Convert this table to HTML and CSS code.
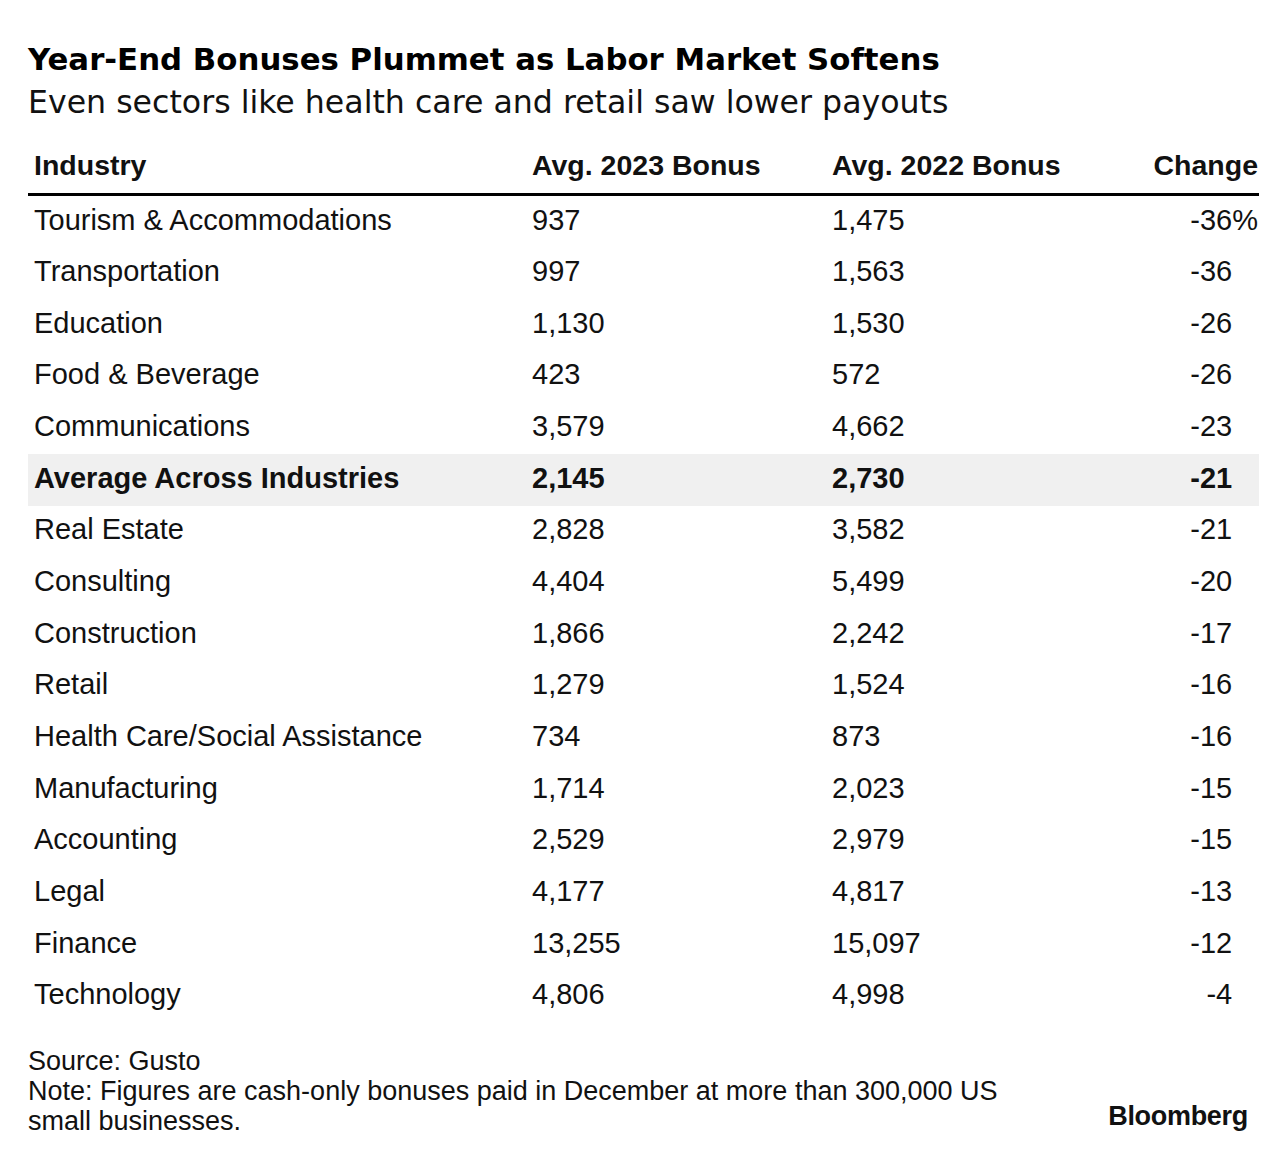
FILE: index.html
```html
<!DOCTYPE html>
<html lang="en">
<head>
<meta charset="utf-8">
<title>Year-End Bonuses Plummet as Labor Market Softens</title>
<link rel="stylesheet" href="styles.css">
</head>
<body>
<main class="chart">
  <h1 class="title">Year-End Bonuses Plummet as Labor Market Softens</h1>
  <p class="subtitle">Even sectors like health care and retail saw lower payouts</p>
  <table class="data">
    <thead>
      <tr>
        <th class="c-ind">Industry</th>
        <th class="c-num">Avg. 2023 Bonus</th>
        <th class="c-num">Avg. 2022 Bonus</th>
        <th class="c-chg">Change</th>
      </tr>
    </thead>
    <tbody>
      <tr><td>Tourism &amp; Accommodations</td><td>937</td><td>1,475</td><td class="chg">-36<span class="pct">%</span></td></tr>
      <tr><td>Transportation</td><td>997</td><td>1,563</td><td class="chg">-36<span class="pct hide">%</span></td></tr>
      <tr><td>Education</td><td>1,130</td><td>1,530</td><td class="chg">-26<span class="pct hide">%</span></td></tr>
      <tr><td>Food &amp; Beverage</td><td>423</td><td>572</td><td class="chg">-26<span class="pct hide">%</span></td></tr>
      <tr><td>Communications</td><td>3,579</td><td>4,662</td><td class="chg">-23<span class="pct hide">%</span></td></tr>
      <tr class="avg"><td>Average Across Industries</td><td>2,145</td><td>2,730</td><td class="chg">-21<span class="pct hide">%</span></td></tr>
      <tr><td>Real Estate</td><td>2,828</td><td>3,582</td><td class="chg">-21<span class="pct hide">%</span></td></tr>
      <tr><td>Consulting</td><td>4,404</td><td>5,499</td><td class="chg">-20<span class="pct hide">%</span></td></tr>
      <tr><td>Construction</td><td>1,866</td><td>2,242</td><td class="chg">-17<span class="pct hide">%</span></td></tr>
      <tr><td>Retail</td><td>1,279</td><td>1,524</td><td class="chg">-16<span class="pct hide">%</span></td></tr>
      <tr><td>Health Care/Social Assistance</td><td>734</td><td>873</td><td class="chg">-16<span class="pct hide">%</span></td></tr>
      <tr><td>Manufacturing</td><td>1,714</td><td>2,023</td><td class="chg">-15<span class="pct hide">%</span></td></tr>
      <tr><td>Accounting</td><td>2,529</td><td>2,979</td><td class="chg">-15<span class="pct hide">%</span></td></tr>
      <tr><td>Legal</td><td>4,177</td><td>4,817</td><td class="chg">-13<span class="pct hide">%</span></td></tr>
      <tr><td>Finance</td><td>13,255</td><td>15,097</td><td class="chg">-12<span class="pct hide">%</span></td></tr>
      <tr><td>Technology</td><td>4,806</td><td>4,998</td><td class="chg">-4<span class="pct hide">%</span></td></tr>
    </tbody>
  </table>
  <footer class="foot">
    <div class="notes">
      <p class="note">Source: Gusto</p>
      <p class="note">Note: Figures are cash-only bonuses paid in December at more than 300,000 US small businesses.</p>
    </div>
    <div class="logo">Bloomberg</div>
  </footer>
</main>
</body>
</html>
```
FILE: styles.css
```css
html, body {
  margin: 0;
  padding: 0;
  background: #ffffff;
}

.chart {
  width: 1231px;
  padding: 41px 0 0 28px;
  color: #111111;
  font-family: "Liberation Sans", Arial, sans-serif;
}

.title {
  margin: 0;
  font-family: "DejaVu Sans", "Liberation Sans", sans-serif;
  font-size: 30.8px;
  line-height: 36px;
  font-weight: 700;
  color: #000000;
}

.subtitle {
  margin: 7px 0 0;
  font-family: "DejaVu Sans", "Liberation Sans", sans-serif;
  font-size: 31.6px;
  line-height: 36px;
  font-weight: 400;
  color: #111111;
}

.data {
  margin-top: 29px;
  width: 1231px;
  border-collapse: collapse;
  table-layout: fixed;
}

.data th {
  font-size: 28.5px;
  line-height: 32px;
  font-weight: 700;
  text-align: left;
  padding: 0 6px 12px;
  border-bottom: 3px solid #000000;
  white-space: nowrap;
}

.data th.c-ind { width: 486px; }
.data th.c-num { width: 288px; }
.data th.c-chg {
  text-align: right;
  padding-right: 1px;
  padding-left: 0;
}

.data td {
  font-size: 29px;
  line-height: 32px;
  padding: 7.5px 6px 12.17px;
  white-space: nowrap;
}

.data td.chg {
  text-align: right;
  padding-right: 1px;
  padding-left: 0;
}

.pct.hide { visibility: hidden; }

.data tr.avg td {
  background: #f0f0f0;
  font-weight: 700;
}

.foot {
  margin-top: 23px;
  display: flex;
  justify-content: space-between;
  align-items: flex-end;
}

.notes {
  width: 1000px;
}

.note {
  margin: 0;
  font-size: 27px;
  line-height: 30px;
  color: #111111;
}

.logo {
  font-size: 27px;
  line-height: 30px;
  font-weight: 700;
  letter-spacing: -0.3px;
  margin: 0 11px 5px 0;
  color: #111111;
}
```
